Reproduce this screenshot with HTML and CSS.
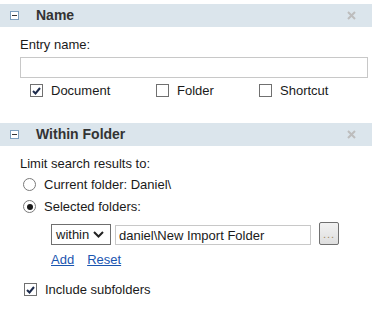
FILE: index.html
```html
<!DOCTYPE html>
<html lang="en">
<head>
    <meta charset="UTF-8">
    <meta name="viewport" content="width=device-width, initial-scale=1.0">
    <title>Search</title>
    <link rel="stylesheet" href="styles.css">
</head>
<body>
<div class="panel">
    <div class="panel-head">
        <span class="toggle"></span>
        <span class="panel-title">Name</span>
        <svg class="close" width="9" height="9" viewBox="0 0 9 9"><path d="M1 1L8 8M8 1L1 8" stroke="#bdbdbd" stroke-width="2"/></svg>
    </div>
    <div class="panel-body name-body">
        <div class="field-label">Entry name:</div>
        <input class="text-input entry-input" type="text">
        <div class="type-row">
            <label class="check-item doc"><span class="box checked"><svg width="9" height="8" viewBox="0 0 9 8"><path d="M1 4L3.5 6.5L8 1" fill="none" stroke="#1d2b4c" stroke-width="2"/></svg></span>Document</label>
            <label class="check-item folder"><span class="box"></span>Folder</label>
            <label class="check-item"><span class="box"></span>Shortcut</label>
        </div>
    </div>
</div>

<div class="panel">
    <div class="panel-head">
        <span class="toggle"></span>
        <span class="panel-title">Within Folder</span>
        <svg class="close" width="9" height="9" viewBox="0 0 9 9"><path d="M1 1L8 8M8 1L1 8" stroke="#bdbdbd" stroke-width="2"/></svg>
    </div>
    <div class="panel-body folder-body">
        <div class="field-label">Limit search results to:</div>
        <label class="radio-item first"><span class="radio"></span>Current folder: Daniel\</label>
        <label class="radio-item second"><span class="radio on"></span>Selected folders:</label>
        <div class="folder-row">
            <div class="select-box"><span>within</span><svg width="11" height="7" viewBox="0 0 11 7"><path d="M1 1L5.5 5.5L10 1" fill="none" stroke="#222" stroke-width="2"/></svg></div>
            <input class="text-input folder-input" type="text" value="daniel\New Import Folder">
            <button class="browse" type="button">...</button>
        </div>
        <div class="links">
            <a href="#">Add</a>
            <a href="#">Reset</a>
        </div>
        <label class="check-item subfolders"><span class="box checked"><svg width="9" height="8" viewBox="0 0 9 8"><path d="M1 4L3.5 6.5L8 1" fill="none" stroke="#1d2b4c" stroke-width="2"/></svg></span>Include subfolders</label>
    </div>
</div>
</body>
</html>
```

FILE: styles.css
```css
* {
    box-sizing: border-box;
}

body {
    font-family: 'Liberation Sans', Arial, sans-serif;
    font-size: 13px;
    line-height: 15px;
    color: #1a1a1a;
    background-color: #fff;
    margin: 0;
    padding: 4px 0 0 0;
}

.panel-head {
    display: flex;
    align-items: center;
    height: 23px;
    background-color: #dbe5ec;
}

.toggle {
    position: relative;
    width: 9px;
    height: 9px;
    margin-left: 10px;
    border: 1px solid #7b9ebd;
    background-color: #fff;
}

.toggle::after {
    content: '';
    position: absolute;
    left: 1px;
    top: 3px;
    width: 5px;
    height: 1px;
    background-color: #333;
}

.panel-title {
    margin-left: 17px;
    font-size: 14px;
    font-weight: bold;
    color: #333;
}

.close {
    margin-left: auto;
    margin-right: 16px;
}

.panel-body {
    padding: 10px 4px 0 20px;
}

.name-body {
    padding-bottom: 26px;
}

.field-label {
    height: 15px;
}

.text-input {
    display: block;
    font-family: inherit;
    font-size: 13px;
    color: #1a1a1a;
    border: 1px solid #c8c8c8;
    padding: 0 3px;
    margin: 0;
    outline: none;
}

.entry-input {
    width: 100%;
    height: 21px;
    margin-top: 5px;
}

.type-row {
    display: flex;
    margin-top: 6px;
    padding-left: 10px;
}

.check-item {
    display: flex;
    align-items: center;
    gap: 8px;
    height: 13px;
}

.check-item.doc {
    width: 126px;
}

.check-item.folder {
    width: 103px;
}

.box {
    display: flex;
    align-items: center;
    justify-content: center;
    width: 13px;
    height: 13px;
    border: 1px solid #707070;
    background-color: #fff;
}

.radio-item {
    display: flex;
    align-items: center;
    gap: 8px;
    height: 15px;
    padding-left: 3px;
}

.radio-item.first {
    margin-top: 6px;
}

.radio-item.second {
    margin-top: 7px;
}

.radio {
    position: relative;
    width: 13px;
    height: 13px;
    border: 1px solid #7a7a7a;
    border-radius: 50%;
    background-color: #fff;
}

.radio.on::after {
    content: '';
    position: absolute;
    left: 2.5px;
    top: 2.5px;
    width: 6px;
    height: 6px;
    border-radius: 50%;
    background-color: #1a1a1a;
}

.folder-row {
    display: flex;
    align-items: flex-end;
    margin-top: 8px;
    padding-left: 31px;
}

.select-box {
    display: flex;
    align-items: center;
    justify-content: space-between;
    width: 60px;
    height: 21px;
    padding: 0 6px 0 4px;
    border: 1px solid #6f6f6f;
}

.folder-input {
    width: 196px;
    height: 20px;
    margin-left: 4px;
}

.browse {
    width: 20px;
    height: 23px;
    margin-left: 8px;
    padding: 0;
    font-family: inherit;
    font-size: 11px;
    letter-spacing: 1px;
    color: #a08a66;
    border: 1px solid #707070;
    border-radius: 2px;
    background: linear-gradient(#f2f2f2, #dedede);
}

.links {
    display: flex;
    gap: 13px;
    margin-top: 7px;
    padding-left: 31px;
}

.links a {
    color: #1a55b0;
    text-decoration: underline;
}

.subfolders {
    margin-top: 16px;
    margin-left: 4px;
}
```
